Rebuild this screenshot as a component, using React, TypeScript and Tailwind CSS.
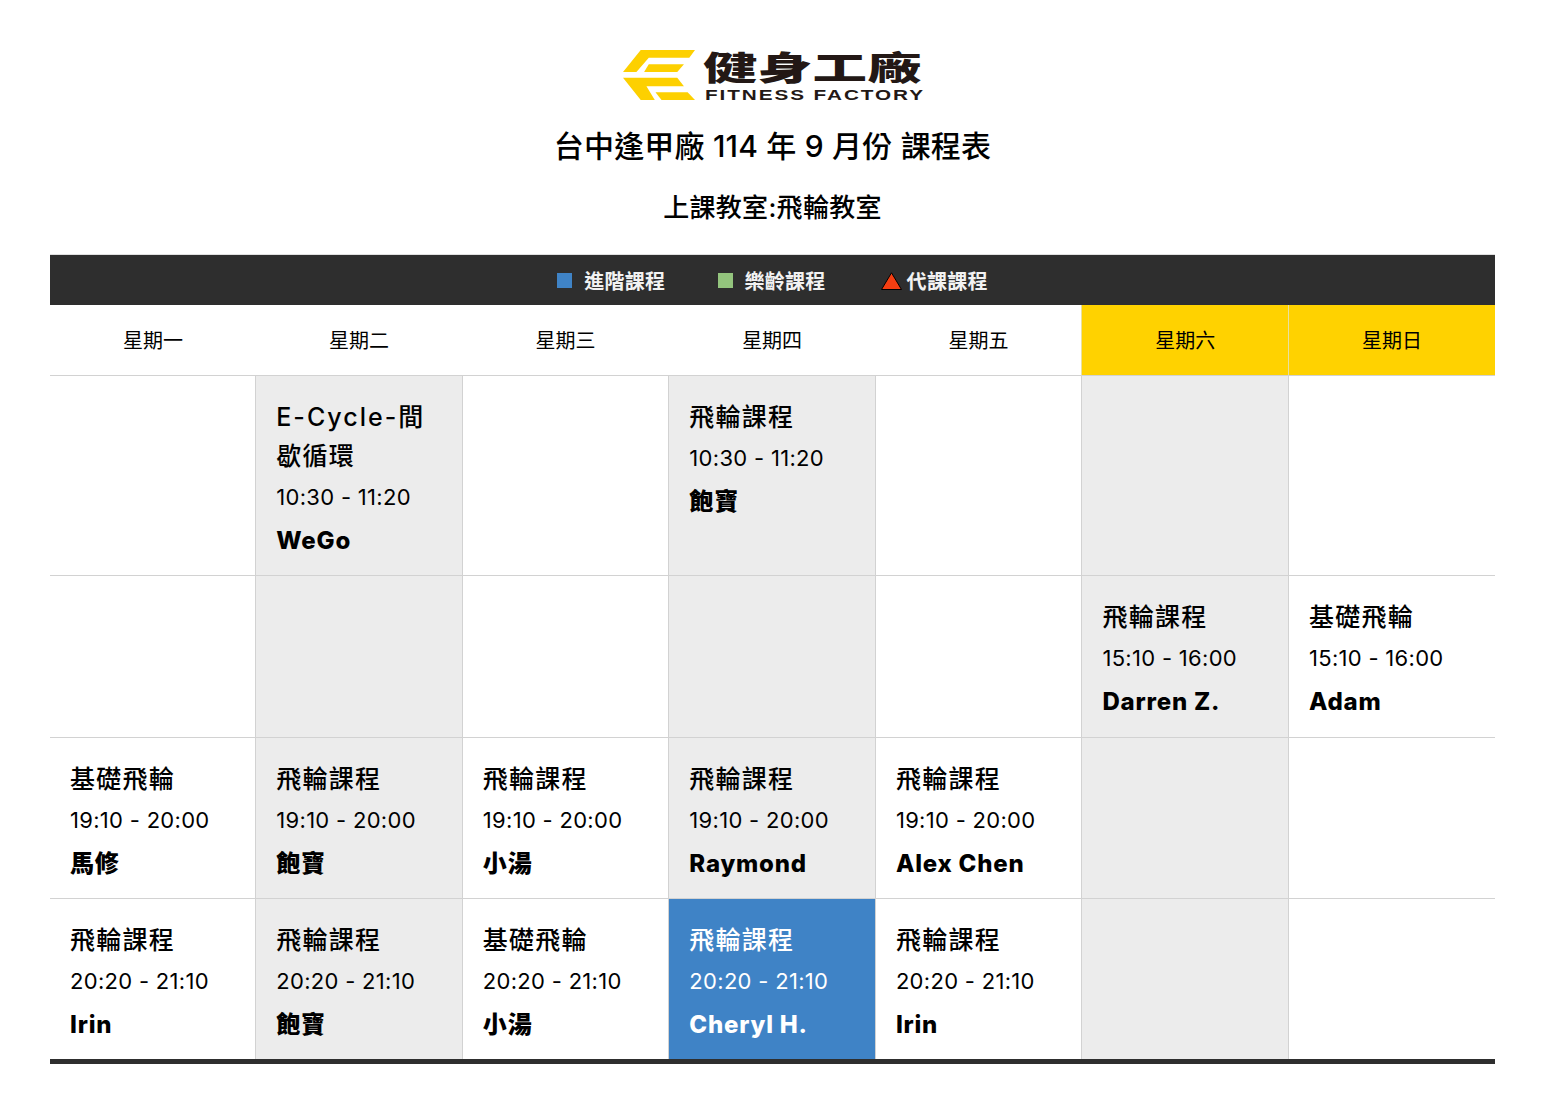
import { ReactNode } from 'react';

const font = "font-['Inter','Noto_Sans_CJK_TC',sans-serif]";

type Session = { name: ReactNode; time: string; coach: string; active?: boolean };

const days = ['星期一', '星期二', '星期三', '星期四', '星期五', '星期六', '星期日'];

const rows: { height: string; cells: (Session | null)[] }[] = [
  {
    height: 'h-[200px]',
    cells: [
      null,
      {
        name: (
          <>
            <span className="tracking-[2px]">E-Cycle-</span>間<br />歇循環
          </>
        ),
        time: '10:30 - 11:20',
        coach: 'WeGo',
      },
      null,
      { name: '飛輪課程', time: '10:30 - 11:20', coach: '飽寶' },
      null,
      null,
      null,
    ],
  },
  {
    height: 'h-[162px]',
    cells: [
      null,
      null,
      null,
      null,
      null,
      { name: '飛輪課程', time: '15:10 - 16:00', coach: 'Darren Z.' },
      { name: '基礎飛輪', time: '15:10 - 16:00', coach: 'Adam' },
    ],
  },
  {
    height: 'h-[161px]',
    cells: [
      { name: '基礎飛輪', time: '19:10 - 20:00', coach: '馬修' },
      { name: '飛輪課程', time: '19:10 - 20:00', coach: '飽寶' },
      { name: '飛輪課程', time: '19:10 - 20:00', coach: '小湯' },
      { name: '飛輪課程', time: '19:10 - 20:00', coach: 'Raymond' },
      { name: '飛輪課程', time: '19:10 - 20:00', coach: 'Alex Chen' },
      null,
      null,
    ],
  },
  {
    height: 'h-[163px]',
    cells: [
      { name: '飛輪課程', time: '20:20 - 21:10', coach: 'Irin' },
      { name: '飛輪課程', time: '20:20 - 21:10', coach: '飽寶' },
      { name: '基礎飛輪', time: '20:20 - 21:10', coach: '小湯' },
      { name: '飛輪課程', time: '20:20 - 21:10', coach: 'Cheryl H.', active: true },
      { name: '飛輪課程', time: '20:20 - 21:10', coach: 'Irin' },
      null,
      null,
    ],
  },
];

function Logo() {
  return (
    <div className="flex h-[50px] items-start gap-[8px]">
      <svg width="72" height="50" viewBox="15 15 215 148" preserveAspectRatio="none">
        <polygon points="68,15 230,15 213,38 92,38 55,80 15,80" fill="#fdd000" />
        <polygon points="92,57 197,57 177,80 78,80" fill="#fdd000" />
        <polygon points="15,97 177,97 197,122 85,122 110,163 68,163" fill="#fdd000" />
        <polygon points="112,140 208,140 230,163 130,163" fill="#fdd000" />
      </svg>
      <div className="w-[219px]">
        <div className="origin-left scale-x-[1.65] whitespace-nowrap font-['Noto_Sans_CJK_TC',sans-serif] text-[33px] leading-[33px] font-black tracking-[0.2px] text-[#231815]">
          健身工廠
        </div>
        <div className="mt-[5px] ml-[2px] origin-left scale-x-[1.38] whitespace-nowrap font-['Liberation_Sans',sans-serif] text-[15px] leading-[13px] font-bold tracking-[1.4px] text-[#231815]">
          FITNESS FACTORY
        </div>
      </div>
    </div>
  );
}

function Cell({ session, shaded }: { session: Session | null; shaded: boolean }) {
  const bg = session?.active ? 'bg-[#3f83c6] text-white' : shaded ? 'bg-[#ececec] text-black' : 'text-black';
  return (
    <td className={`border border-[#d2d2d2] px-[20px] pt-[22px] align-top first:border-l-0 last:border-r-0 ${bg}`}>
      {session && (
        <>
          <p className="text-[25px] leading-[39px] font-medium tracking-[1.25px]">{session.name}</p>
          <p className="mt-[2px] text-[22px] leading-[39px] tracking-[0.3px]">{session.time}</p>
          <p className="mt-[4px] text-[24px] leading-[39px] font-extrabold tracking-[0.8px]">{session.coach}</p>
        </>
      )}
    </td>
  );
}

export default function App() {
  return (
    <div className={`${font} min-h-[1115px] bg-white px-[50px] pt-[50px] text-black`}>
      <div className="flex justify-center">
        <Logo />
      </div>
      <h1 className="mt-[21px] text-center text-[30px] leading-[50px] font-medium tracking-[0.2px]">台中逢甲廠 114 年 9 月份 課程表</h1>
      <h2 className="mt-[12px] text-center text-[26px] leading-[50px] font-medium tracking-[0.3px]">上課教室:飛輪教室</h2>

      <div className="mt-[21px] flex h-[51px] items-center justify-center border-t border-t-[#e0e0e0] bg-[#2e2e2e] pt-[4px] text-[20px] font-bold tracking-[0.3px] text-[#f2f2f2]">
        <span className="mr-[12px] h-[15px] w-[15px] -translate-y-[2px] bg-[#3f83c6]" />
        <span>進階課程</span>
        <span className="mr-[11px] ml-[53px] h-[15px] w-[15px] -translate-y-[2px] bg-[#93c47d]" />
        <span>樂齡課程</span>
        <svg className="mr-[5px] ml-[55px] -translate-y-[1px]" width="21" height="18" viewBox="0 0 21 18">
          <polygon points="10.5,0.8 20.5,17.5 0.5,17.5" fill="#f43e12" stroke="#000" strokeWidth="1" />
        </svg>
        <span>代課課程</span>
      </div>

      <table className="w-full table-fixed border-collapse border-b-[5px] border-b-[#2e2e2e]">
        <colgroup>
          <col className="w-[205.8px]" />
        </colgroup>
        <thead>
          <tr className="h-[70px]">
            {days.map((d, i) => (
              <th
                key={d}
                className={`border-b border-b-[#d2d2d2] pt-[2px] text-center text-[20px] font-normal ${i >= 5 ? 'border-l border-l-[#e8e0a0] bg-[#ffd200]' : ''}`}
              >
                {d}
              </th>
            ))}
          </tr>
        </thead>
        <tbody>
          {rows.map((row, r) => (
            <tr key={r} className={row.height}>
              {row.cells.map((c, i) => (
                <Cell key={i} session={c} shaded={i % 2 === 1} />
              ))}
            </tr>
          ))}
        </tbody>
      </table>
    </div>
  );
}
